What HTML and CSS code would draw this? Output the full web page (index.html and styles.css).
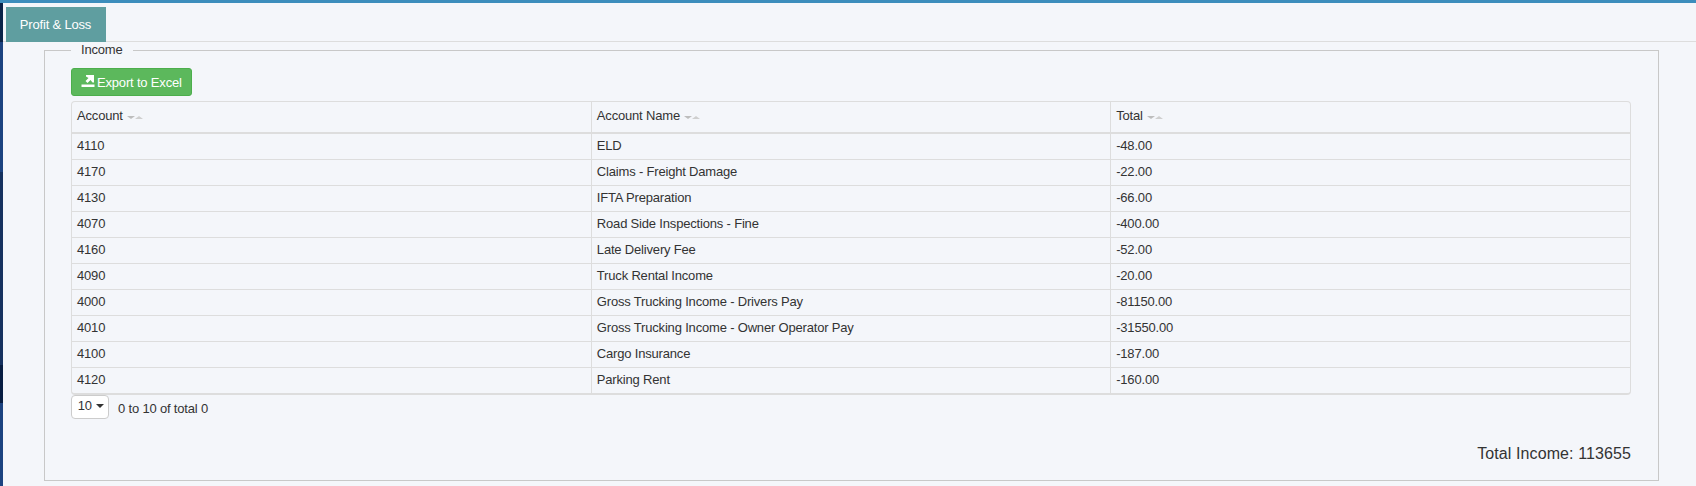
FILE: index.html
```html
<!DOCTYPE html>
<html lang="en">
<head>
<meta charset="utf-8">
<title>Profit &amp; Loss</title>
<link rel="stylesheet" href="styles.css">
</head>
<body>
<div class="topbar"></div>
<div class="shell">
  <aside class="strip">
    <div class="seg seg-a"></div>
    <div class="seg seg-b"></div>
    <div class="seg seg-c"></div>
    <div class="seg seg-d"></div>
    <div class="seg seg-e"></div>
  </aside>
  <main class="main">
    <nav class="tabs"><a class="tab">Profit &amp; Loss</a></nav>
    <fieldset class="panel">
      <legend class="legend">Income</legend>
      <button class="btn-export" type="button">
        <svg class="export-icon" width="14" height="14" viewBox="0 0 14 14"><path d="M0.500 9.500h13V12H0.500z" fill="#fff"/><path d="M5 0H13v7.500h-1.500L9.500 5 6.500 8 4.500 6 7.500 3 5 1.500z" fill="#fff"/></svg>
        <span>Export to Excel</span>
      </button>
      <div class="table-wrap">
        <table class="grid">
          <thead>
            <tr>
              <th>Account <span class="sort"><i class="down"></i><i class="up"></i></span></th>
              <th>Account Name <span class="sort"><i class="down"></i><i class="up"></i></span></th>
              <th>Total <span class="sort"><i class="down"></i><i class="up"></i></span></th>
            </tr>
          </thead>
          <tbody>
            <tr><td>4110</td><td>ELD</td><td>-48.00</td></tr>
            <tr><td>4170</td><td>Claims - Freight Damage</td><td>-22.00</td></tr>
            <tr><td>4130</td><td>IFTA Preparation</td><td>-66.00</td></tr>
            <tr><td>4070</td><td>Road Side Inspections - Fine</td><td>-400.00</td></tr>
            <tr><td>4160</td><td>Late Delivery Fee</td><td>-52.00</td></tr>
            <tr><td>4090</td><td>Truck Rental Income</td><td>-20.00</td></tr>
            <tr><td>4000</td><td>Gross Trucking Income - Drivers Pay</td><td>-81150.00</td></tr>
            <tr><td>4010</td><td>Gross Trucking Income - Owner Operator Pay</td><td>-31550.00</td></tr>
            <tr><td>4100</td><td>Cargo Insurance</td><td>-187.00</td></tr>
            <tr><td>4120</td><td>Parking Rent</td><td>-160.00</td></tr>
          </tbody>
        </table>
      </div>
      <div class="pager">
        <button class="page-size" type="button">10 <i class="caret"></i></button>
        <span class="page-info">0 to 10 of total 0</span>
      </div>
      <div class="total">Total Income: 113655</div>
    </fieldset>
  </main>
</div>
</body>
</html>
```
FILE: styles.css
```css
* { box-sizing: border-box; }
html, body { margin: 0; height: 100%; overflow: hidden; }
body {
  background: #f4f6fa;
  color: #333;
  font-family: "Liberation Sans", Arial, sans-serif;
  font-size: 13px;
  letter-spacing: -0.18px;
}
.topbar { height: 3px; background: #3c8dbc; }
.shell { display: flex; height: 483px; }
.strip { width: 3px; flex: none; display: flex; flex-direction: column; }
.seg-a { height: 39px; background: #0a2348; }
.seg-b { height: 130px; background: #1c4380; }
.seg-c { height: 193px; background: #15315f; }
.seg-d { height: 38px; background: #071d42; }
.seg-e { flex: 1; background: #1c4380; }
.main { flex: 1; min-width: 0; padding-top: 4px; }
.tabs { height: 35px; padding-left: 3px; border-bottom: 1px solid #ddd; }
.tab {
  display: block;
  width: 100px;
  height: 35px;
  padding-right: 1px;
  background: #5f9ea0;
  color: #fff;
  line-height: 35px;
  text-align: center;
}
.panel {
  margin: 0 37px 0 41px;
  padding: 10px 26px 0 26px;
  height: 439px;
  border: 1px solid #c8c8c8;
  min-width: 0;
}
.legend {
  margin-left: 0;
  padding: 0 10px;
  font-size: 13px;
  line-height: 16px;
  color: #333;
}
.btn-export {
  display: flex;
  align-items: center;
  gap: 2px;
  width: 121px;
  height: 28px;
  padding: 0 9px;
  background: #5cb85c;
  border: 1px solid #4cae4c;
  border-radius: 3px;
  color: #fff;
  font: 13px "Liberation Sans", Arial, sans-serif;
  letter-spacing: inherit;
  white-space: nowrap;
}
.export-icon { flex: none; }
.table-wrap {
  width: 1560px;
  margin-top: 5px;
  border: 1px solid #ddd;
  border-radius: 4px;
  border-bottom-width: 2px;
  overflow: hidden;
}
.grid { width: 100%; border-collapse: collapse; table-layout: fixed; }
.grid th {
  height: 31px;
  padding: 0 5px 3px;
  text-align: left;
  font-weight: 400;
  border-bottom: 2px solid #ddd;
  border-left: 1px solid #ddd;
}
.grid td {
  height: 26px;
  padding: 0 5px 2px;
  border-bottom: 1px solid #ddd;
  border-left: 1px solid #ddd;
}
.grid tr > :first-child { border-left: 0; }
.grid tbody tr:last-child td { border-bottom: 0; }
.sort { display: inline-flex; vertical-align: middle; margin-top: 1px; margin-left: 1px; }
.sort i { width: 0; height: 0; border-left: 4px solid transparent; border-right: 4px solid transparent; display: block; }
.sort .down { border-top: 3px solid #bdbdbd; }
.sort .up { border-bottom: 3px solid #cfcfcf; }
.pager { display: flex; align-items: center; gap: 9px; margin-top: 0; }
.page-size {
  width: 38px;
  height: 24px;
  padding: 0 0 4px 2px;
  background: #fff;
  border: 1px solid #ccc;
  border-radius: 4px;
  color: #333;
  font: 13px "Liberation Sans", Arial, sans-serif;
  letter-spacing: inherit;
}
.caret {
  display: inline-block;
  vertical-align: middle;
  width: 0;
  height: 0;
  margin-left: 1px;
  border-top: 4px solid #333;
  border-left: 4px solid transparent;
  border-right: 4px solid transparent;
}
.page-info { padding-top: 2px; }
.total {
  width: 1560px;
  margin-top: 25px;
  text-align: right;
  font-size: 16px;
  line-height: 20px;
  letter-spacing: 0.1px;
}
```
